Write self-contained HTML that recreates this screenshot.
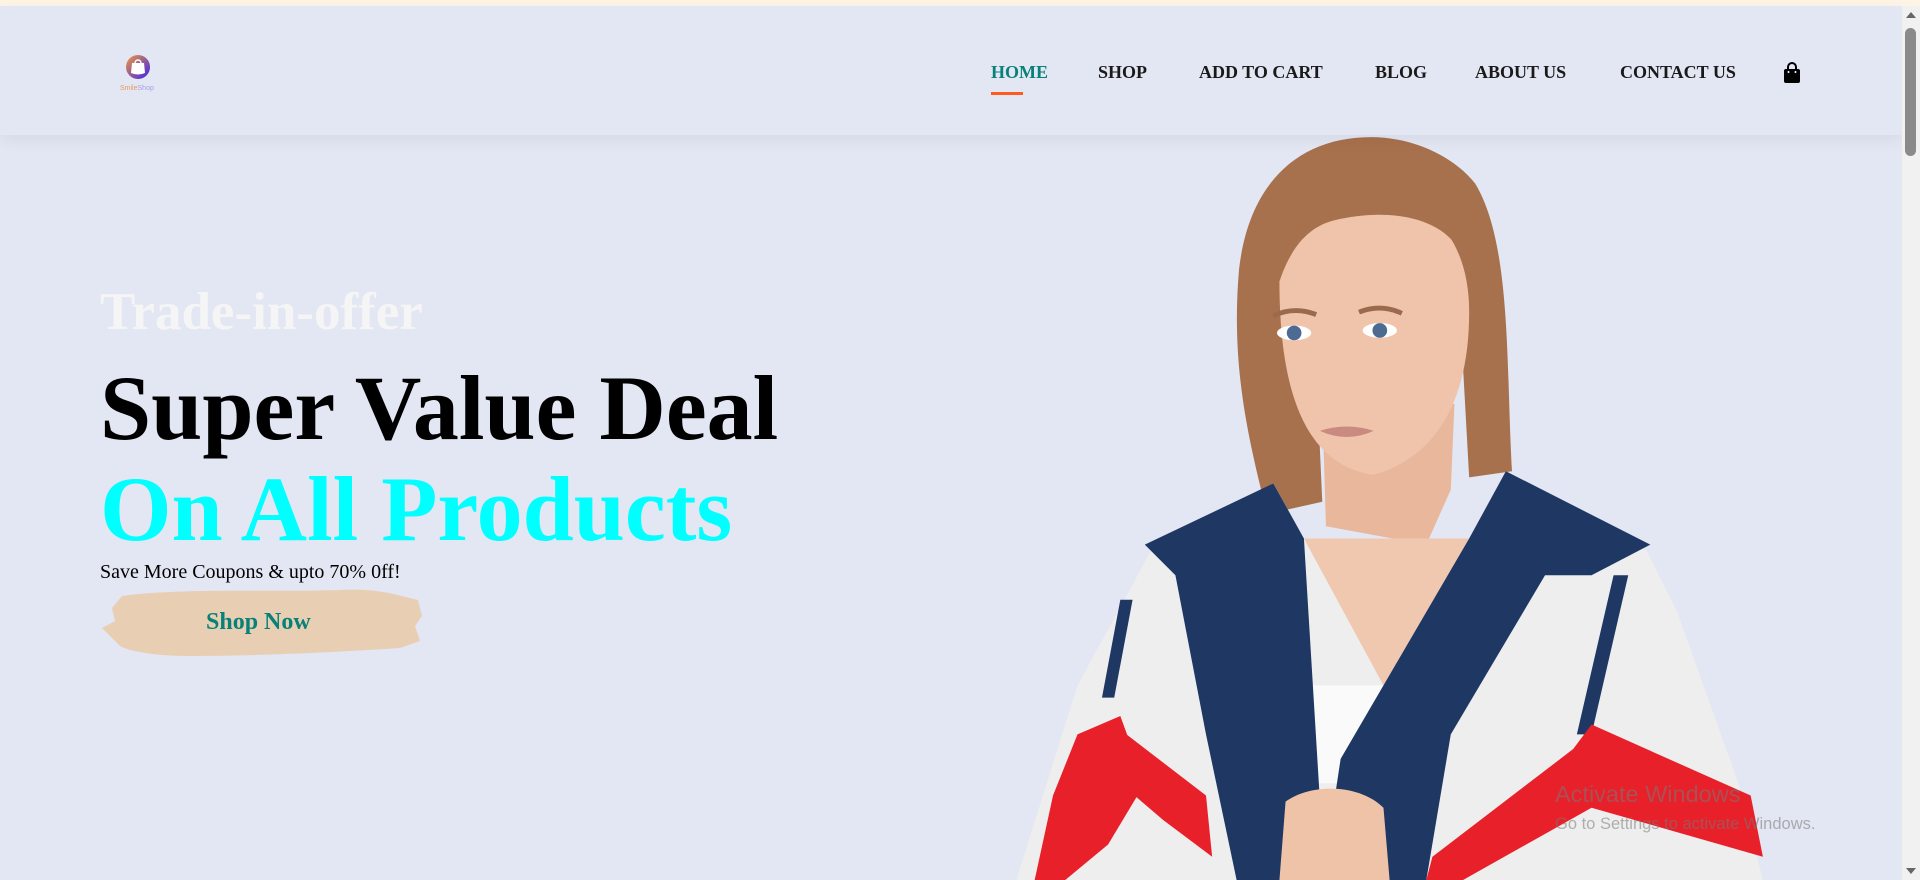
<!DOCTYPE html>
<html><head><meta charset="utf-8"><style>
*{margin:0;padding:0;box-sizing:border-box}
html,body{width:1920px;height:880px;overflow:hidden;background:#e3e6f3;font-family:"Liberation Serif",serif}
.top{position:absolute;left:0;top:0;width:1920px;height:6px;background:#fdf4e6}
.hdr{position:absolute;left:0;top:6px;width:1902px;height:129px;background:#e3e6f3;box-shadow:0 5px 15px rgba(0,0,0,0.06);z-index:2}
.nav a{position:absolute;top:56px;font-weight:bold;font-size:18px;color:#1a1a1a;text-decoration:none;letter-spacing:0}
.nav a.act{color:#088178}
.ul{position:absolute;left:991px;top:86px;width:32px;height:3px;background:#ff5a1f}
.h{position:absolute;left:100px;font-weight:bold;white-space:nowrap}
.sb{position:absolute;left:1902px;top:6px;width:18px;height:874px;background:#f1f1f1;z-index:3}
.th{position:absolute;left:1905px;top:28px;width:11px;height:128px;background:#8a8a8a;border-radius:6px;z-index:4}
.wm{position:absolute;color:rgba(120,120,120,0.55);font-family:"Liberation Sans",sans-serif;white-space:nowrap;z-index:5}
</style></head><body>
<div class="top"></div>
<svg style="position:absolute;left:0;top:0" width="1920" height="880" viewBox="0 0 1568 719">
<path d="M1120,112 C1060,112 1020,150 1012,220 C1005,300 1020,360 1035,420 L1080,410 L1075,300 C1070,230 1080,190 1120,175 C1165,175 1195,220 1195,300 L1200,390 L1235,385 C1230,300 1235,200 1205,150 C1185,125 1150,112 1120,112Z" fill="#a8714d"/>
<path d="M1080,330 L1083,430 L1165,445 L1185,400 L1188,330Z" fill="#e9b79c"/>
<path d="M1045,230 C1045,180 1080,160 1122,160 C1168,162 1200,195 1200,255 C1200,320 1178,372 1122,388 C1066,380 1045,320 1045,230Z" fill="#f0c4aa"/>
<path d="M1040,190 C1060,160 1100,150 1130,155 C1170,160 1195,190 1200,240 L1195,210 C1180,175 1130,170 1090,180 C1070,185 1055,200 1045,230Z" fill="#a8714d"/>
<ellipse cx="1057" cy="272" rx="14" ry="6" fill="#fff"/><circle cx="1057" cy="272" r="6" fill="#4c6a92"/>
<ellipse cx="1127" cy="270" rx="14" ry="6" fill="#fff"/><circle cx="1127" cy="270" r="6" fill="#4c6a92"/>
<path d="M1040,258 Q1057,250 1075,257" stroke="#9b6a4e" stroke-width="4" fill="none"/>
<path d="M1110,255 Q1128,248 1145,256" stroke="#9b6a4e" stroke-width="4" fill="none"/>
<path d="M1078,352 Q1100,345 1122,352 Q1100,362 1078,352Z" fill="#c98a80"/>
<path d="M940,450 L880,560 L830,719 L1440,719 L1420,640 L1370,500 L1345,450 L1230,385 L1200,440 L1130,560 L1065,440 L1040,395 Z" fill="#eeeeee"/>
<path d="M1065,440 L1200,440 L1130,560Z" fill="#f0c8b0"/>
<path d="M1070,560 L1190,560 L1150,640 L1075,640Z" fill="#fafafa"/>
<path d="M935,445 L1040,395 L1065,440 L1082,719 L1010,719 L985,600 L960,470Z" fill="#1f3763"/>
<path d="M1230,385 L1348,445 L1300,470 L1262,470 L1185,600 L1165,719 L1080,719 L1095,620 L1130,560 L1200,440Z" fill="#1f3763"/>
<path d="M1318,470 L1330,470 L1300,600 L1288,600Z" fill="#1f3763"/>
<path d="M915,490 L925,490 L910,570 L900,570Z" fill="#1f3763"/>
<path d="M880,600 L915,585 L935,640 L905,690 L870,719 L845,719 L860,650Z" fill="#e8202a"/>
<path d="M920,600 L985,650 L990,700 L950,670 L915,640Z" fill="#e8202a"/>
<path d="M1170,700 L1285,612 L1300,592 L1430,650 L1440,700 L1300,660 L1195,719 L1165,719Z" fill="#e8202a"/>
<path d="M1050,655 C1070,640 1110,640 1130,660 L1135,719 L1045,719Z" fill="#efc3a8"/>
</svg>
<div class="hdr">
<div class="nav">
<a class="act" style="left:991px">HOME</a>
<a style="left:1098px">SHOP</a>
<a style="left:1199px">ADD TO CART</a>
<a style="left:1375px">BLOG</a>
<a style="left:1475px">ABOUT US</a>
<a style="left:1620px">CONTACT US</a>
</div>
<div class="ul"></div>
<svg style="position:absolute;left:1783px;top:56px" width="18" height="22" viewBox="0 0 18 22"><path d="M5,7 V5 a4,4 0 0 1 8,0 V7" stroke="#000" stroke-width="2" fill="none"/><rect x="1" y="7" width="16" height="14" rx="2" fill="#000"/><circle cx="5.5" cy="10" r="1" fill="#fff"/><circle cx="12.5" cy="10" r="1" fill="#fff"/></svg>
<svg style="position:absolute;left:118px;top:42px" width="40" height="45" viewBox="0 0 40 45"><defs><linearGradient id="g2" x1="0" y1="0" x2="1" y2="1"><stop offset="0" stop-color="#f39a3a"/><stop offset="1" stop-color="#3b20f0"/></linearGradient></defs><circle cx="20" cy="19" r="12" fill="url(#g2)"/><path d="M14,15 L26,15 L27,25 Q20,28 13,25Z" fill="#fff"/><path d="M17,15 a3,3 0 0 1 6,0" stroke="#fff" stroke-width="1.5" fill="none"/><text x="2" y="42" font-family="Liberation Sans" font-size="7" fill="#e99a60">Smile<tspan fill="#a9a0e8">Shop</tspan></text></svg>
</div>
<div class="h" style="top:282px;font-size:53px;color:#f5f5f5">Trade-in-offer</div>
<div class="h" style="top:355px;font-size:92px;color:#000">Super Value Deal</div>
<div class="h" style="top:456px;font-size:92px;color:#00ffff">On All Products</div>
<div class="h" style="top:561px;font-size:20px;font-weight:normal;color:#000">Save More Coupons &amp; upto 70% 0ff!</div>
<svg style="position:absolute;left:100px;top:586px" width="325" height="74" viewBox="0 0 325 74"><path d="M22,10 C80,2 180,6 240,4 C280,2 300,10 318,14 L322,30 L315,40 L320,55 L300,62 C240,66 160,70 90,70 C60,70 30,66 20,60 L10,50 L2,42 L15,35 L12,22Z" fill="#e8cfb3"/></svg>
<div class="h" style="left:206px;top:609px;font-size:24px;color:#088178">Shop Now</div>
<div class="wm" style="left:1555px;top:781px;font-size:23.5px">Activate Windows</div>
<div class="wm" style="left:1555px;top:815px;font-size:16.5px">Go to Settings to activate Windows.</div>
<div class="sb"></div><div class="th"></div>
<svg style="position:absolute;left:1905px;top:10px;z-index:4" width="12" height="10"><path d="M1,8 L6,2 L11,8Z" fill="#666"/></svg>
<svg style="position:absolute;left:1905px;top:866px;z-index:4" width="12" height="10"><path d="M1,2 L6,8 L11,2Z" fill="#666"/></svg>
</body></html>
